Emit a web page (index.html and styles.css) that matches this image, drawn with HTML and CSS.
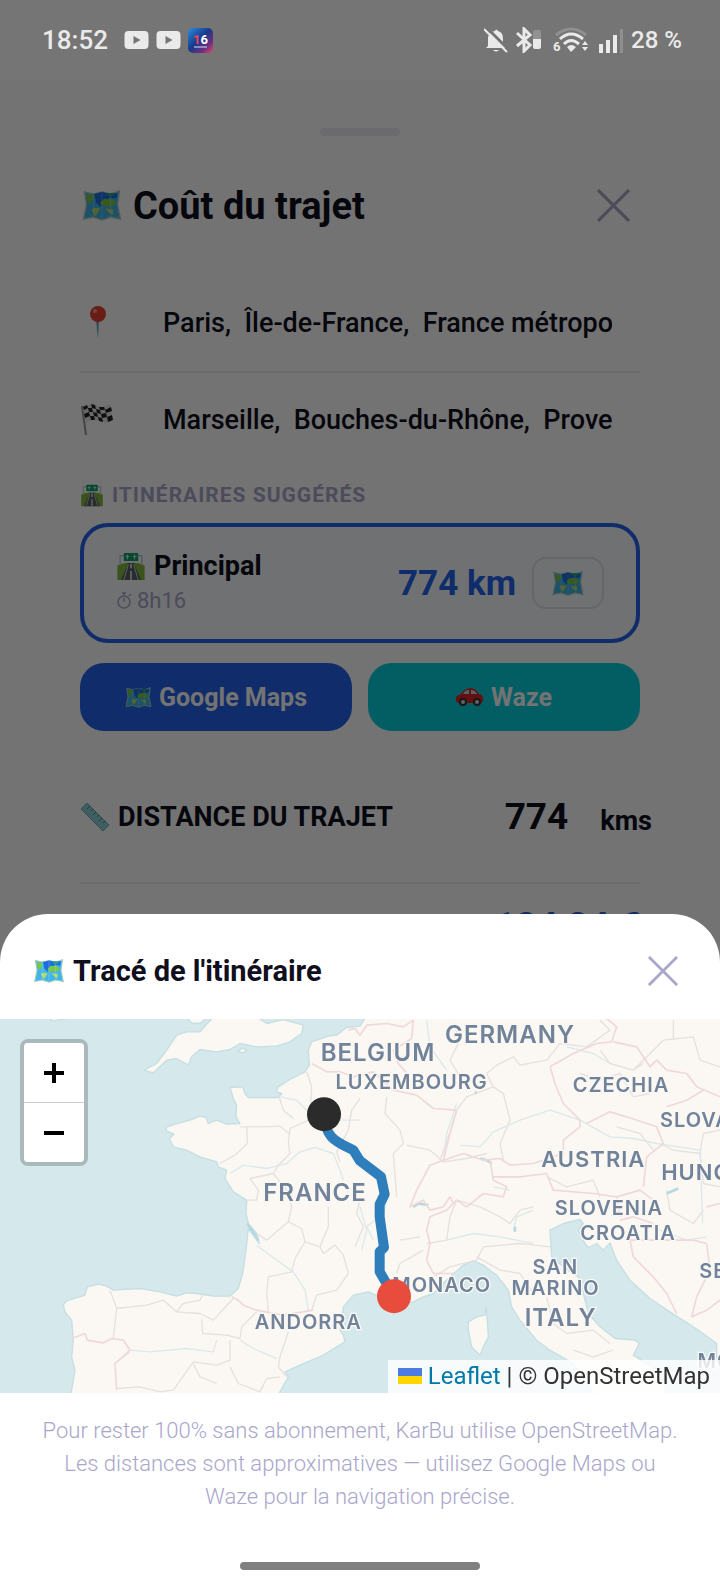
FILE: index.html
```html
<!DOCTYPE html>
<html lang="fr">
<head>
    <meta charset="UTF-8">
    <meta name="viewport" content="width=device-width, initial-scale=1.0">
    <title>KarBu - Coût du trajet</title>
    <link rel="stylesheet" href="styles.css">
</head>
<body>
    <!-- Shared icons -->
    <svg class="icon-defs" aria-hidden="true">
        <symbol id="icon-map" viewBox="0 0 40 32">
            <path d="M2 2 L11 4 L20 2 L29 4 L38 1 L36 15 L39 30 L29 28 L20 31 L11 28 L1 30 L4 15 Z" fill="#3fb5e8" stroke="#a9c9c6" stroke-width="1.5"/>
            <path d="M12 4 L20 2 L29 4 L36 3 L35 9 L27 8 L24 14 L18 17 L14 13 Z" fill="#1d6fe0"/>
            <path d="M4 4 L10 5 L12 8 L9 11 L8 15 L5 12 Z M18 14 L22 9 L31 10 L35 14 L29 17 L20 16 Z" fill="#7ac943"/>
            <path d="M9 20 Q13 17 18 19 L16 23 L13 27 Z M23 19 L32 20 L31 26 L27 23 Z" fill="#b5d96a"/>
            <path d="M24 3 L34 3 L32 6 L26 6 Z" fill="#2ba084"/>
            <path d="M11 5 V28 M20 3 V30 M29 5 V28" stroke="#fff" stroke-opacity=".25"/>
        </symbol>
        <symbol id="icon-road" viewBox="0 0 32 32">
            <path d="M1 15 Q8 11 16 12 Q24 11 31 15 V31 H1 Z" fill="#7fb83a"/>
            <path d="M13 12 H19 L27 31 H5 Z" fill="#5a5f66"/>
            <path d="M16 13 V18 M16 21 V31" stroke="#fff" stroke-width="1.5"/>
            <path d="M13 14 L8 31 M19 14 L24 31" stroke="#ddd"/>
            <path d="M4 15 V4 H28 V15" fill="none" stroke="#b8c4cc" stroke-width="1.5"/>
            <rect x="8" y="1" width="16" height="9" rx="1" fill="#12a06a"/>
            <path d="M12 3 V8 M10 5 H14 M20 3 V8 M18 5 H22" stroke="#d8fff0"/>
        </symbol>
        <symbol id="icon-close" viewBox="0 0 32 32">
            <path d="M1 1 L31 31 M31 1 L1 31" fill="none" stroke="#a9a6cb" stroke-width="3"/>
        </symbol>
        <symbol id="icon-youtube" viewBox="0 0 24 18">
            <path d="M4 0 H20 Q24 0 24 4 V14 Q24 18 20 18 H4 Q0 18 0 14 V4 Q0 0 4 0 Z M9 5 V13 L16 9 Z" fill="#eaeaea" fill-rule="evenodd"/>
        </symbol>
    </svg>

    <div class="status-bar">
        <div class="status-left">
            <span class="clock">18:52</span>
            <svg width="25" height="18"><use href="#icon-youtube"/></svg>
            <svg width="25" height="18"><use href="#icon-youtube"/></svg>
            <svg width="25" height="25" viewBox="0 0 25 25">
                <defs>
                    <linearGradient id="app-bg" x1="0" y1="0" x2="1" y2="1">
                        <stop offset="0" stop-color="#2c8fe0"/>
                        <stop offset=".45" stop-color="#173a8c"/>
                        <stop offset=".75" stop-color="#6a2f80"/>
                        <stop offset="1" stop-color="#f0455c"/>
                    </linearGradient>
                </defs>
                <rect width="25" height="25" rx="5" fill="url(#app-bg)"/>
                <text x="5" y="16" class="app-digit"><tspan class="app-digit-red">1</tspan>6</text>
                <path d="M6 19 H19" stroke="#d8def5" stroke-width="1"/>
            </svg>
        </div>
        <div class="status-right">
            <svg width="25" height="25" viewBox="0 0 25 25">
                <path d="M4 18 V9 Q6 3 11 3 Q12 0 14 3 Q19 4 19 11 V15 L22 20 H2 Z M9 22 H15 Q12 25 9 22 Z" fill="#eaeaea"/>
                <path d="M2 -1 L26 23" stroke="#757575" stroke-width="3"/>
                <path d="M0 1 L23 24" stroke="#eaeaea" stroke-width="2"/>
            </svg>
            <svg width="26" height="26" viewBox="0 0 26 26">
                <path d="M1 6 L14 18 L8 24 V2 L14 8 L1 19" fill="none" stroke="#eaeaea" stroke-width="3"/>
                <path d="M17 12 V5 Q17 3 19 3 H23 Q25 3 25 5 V12 Z" fill="#929292"/>
                <path d="M17 12 H25 V20 Q25 22 23 22 H19 Q17 22 17 20 Z" fill="#eaeaea"/>
            </svg>
            <svg class="wifi" width="36" height="26" viewBox="0 0 36 26">
                <path d="M3 8 Q18 -4 33 8" fill="none" stroke="#8f8f8f" stroke-width="3"/>
                <path d="M7 12 Q18 2 30 12 M11 17 Q18 10 26 17" fill="none" stroke="#eaeaea" stroke-width="3"/>
                <path d="M14 20 Q18 16 23 20 L18 25 Z M29 18 L32 14 L35 18 Z M29 20 L32 24 L35 20 Z" fill="#eaeaea"/>
                <text x="0" y="24" class="wifi-gen">6</text>
            </svg>
            <svg class="signal" width="26" height="25" viewBox="0 0 26 25">
                <path d="M1 16 H5 V25 H1 Z M8 12 H12 V25 H8 Z M15 7 H19 V25 H15 Z" fill="#eaeaea"/>
                <path d="M22 1 H25 V25 H22 Z" fill="#8f8f8f"/>
            </svg>
            <span class="battery">28 %</span>
        </div>
    </div>

    <main class="trip">
        <div class="handle"></div>
        <header class="trip-header">
            <h1><svg width="40" height="31"><use href="#icon-map"/></svg> Coût du trajet</h1>
            <button class="close" aria-label="Fermer"><svg width="33" height="33"><use href="#icon-close"/></svg></button>
        </header>

        <div class="place">
            <label for="from" aria-label="Départ">
                <svg width="34" height="34" viewBox="0 0 34 34">
                    <path d="M16 14 H19 L18 33 Z" fill="#6fa5b4"/>
                    <circle cx="18" cy="8" r="8" fill="#e8432f"/>
                    <circle cx="15" cy="5" r="2" fill="#f59a8b"/>
                </svg>
            </label>
            <input type="text" id="from" value="Paris,  Île-de-France,  France métropolitaine">
        </div>
        <div class="place">
            <label for="to" aria-label="Arrivée">
                <svg width="34" height="34" viewBox="0 0 34 34">
                    <path d="M2 3 L6 32" stroke="#9a9a9a" stroke-width="2"/>
                    <path d="M3 4 Q11 -1 17 3 Q24 5 30 1 L33 17 Q26 22 19 18 Q12 15 6 20 Z" fill="#e9e9e9"/>
                    <path d="M3 4 L7 2 L8 5 L4 7 Z M11 1 L15 2 L16 6 L12 5 Z M19 4 L24 4 L25 7 L20 7 Z M8 5 L12 5 L13 9 L9 9 Z M16 6 L20 7 L21 11 L17 10 Z M25 7 L31 4 L32 8 L26 10 Z M4 11 L9 9 L10 13 L5 15 Z M13 9 L17 10 L18 14 L14 13 Z M21 11 L26 10 L27 14 L22 15 Z M10 13 L14 13 L15 17 L11 17 Z M18 14 L22 15 L23 19 L19 18 Z M27 14 L32 12 L33 17 L28 19 Z" fill="#222"/>
                </svg>
            </label>
            <input type="text" id="to" value="Marseille,  Bouches-du-Rhône,  Provence">
        </div>

        <h2 class="section-label"><svg width="24" height="23"><use href="#icon-road"/></svg> ITINÉRAIRES SUGGÉRÉS</h2>
        <div class="route-card">
            <div class="route-info">
                <div class="route-name"><svg width="30" height="29"><use href="#icon-road"/></svg> Principal</div>
                <div class="route-time">
                    <svg width="16" height="18" viewBox="0 0 16 18" fill="none" stroke="#a9a6cb" stroke-width="1.5"><circle cx="8" cy="10" r="6"/><path d="M8 10 V6 M6 1 H10 M8 1 V3 M13 4 L15 2"/></svg>
                    8h16
                </div>
            </div>
            <div class="route-km">774 km</div>
            <button class="show-map" aria-label="Voir le tracé"><svg width="32" height="25"><use href="#icon-map"/></svg></button>
        </div>
        <div class="nav-buttons">
            <button class="google"><svg width="27" height="21"><use href="#icon-map"/></svg> Google Maps</button>
            <button class="waze">
                <svg width="28" height="18" viewBox="0 0 28 18">
                    <path d="M0 9 Q1 7 5 6 Q8 1 14 0 Q20 0 23 6 Q28 7 27 12 L26 15 H2 Q-1 13 0 9 Z" fill="#e02424"/>
                    <path d="M7 6 Q9 2 13 2 V6 Z M15 2 Q19 2 21 6 H15 Z" fill="#b9dbe8"/>
                    <circle cx="7" cy="14" r="4" fill="#333"/><circle cx="7" cy="14" r="2" fill="#ddd"/>
                    <circle cx="21" cy="14" r="4" fill="#333"/><circle cx="21" cy="14" r="2" fill="#ddd"/>
                </svg>
                Waze
            </button>
        </div>

        <div class="distance">
            <span class="distance-label">
                <svg width="30" height="30" viewBox="0 0 30 30">
                    <path d="M1 7 L7 1 L29 23 L23 29 Z" fill="#8fd0d8" stroke="#6fb0b8"/>
                    <path d="M10 4 L7 7 M13 7 L11 9 M16 10 L13 13 M19 13 L17 15 M22 16 L19 19 M25 19 L23 21" stroke="#4d8a94"/>
                </svg>
                DISTANCE DU TRAJET
            </span>
            <span class="distance-value">774</span>
            <span class="distance-unit">kms</span>
        </div>
        <div class="cost">
            <span class="cost-label">Coût</span>
            <span class="cost-value">124,24 €</span>
        </div>
    </main>

    <div class="overlay">
        <section class="sheet">
            <header class="sheet-header">
                <h2><svg width="30" height="24"><use href="#icon-map"/></svg> Tracé de l'itinéraire</h2>
                <button class="close" aria-label="Fermer"><svg width="30" height="30"><use href="#icon-close"/></svg></button>
            </header>

            <div class="map">
                <!-- 3 map units = 1px -->
                <svg class="map-canvas" viewBox="0 25 2160 1125" preserveAspectRatio="xMidYMid slice">
                    <g class="land">
                        <path d="M1110 0 L1080 48 L1040 52 L1010 75 L985 78 L935 95 L925 120 L928 165 L915 185 L870 208 L835 230 L828 245 L845 250 L835 262 L790 262 L745 262 L735 250 L728 230 L690 232 L700 265 L710 285 L708 320 L720 340 L680 342 L650 330 L625 340 L618 322 L600 318 L570 330 L540 338 L500 350 L498 362 L522 372 L508 385 L520 410 L560 420 L600 440 L650 455 L655 470 L680 480 L675 505 L700 545 L740 570 L738 610 L745 640 L770 670 L778 700 L745 655 L738 720 L728 790 L715 835 L690 858 L640 858 L590 850 L560 848 L530 858 L480 845 L420 835 L340 840 L320 828 L295 822 L262 830 L255 855 L200 872 L190 885 L195 905 L215 930 L220 990 L215 1040 L225 1080 L208 1180 L820 1180 L865 1100 L855 1085 L900 1065 L970 1035 L1035 995 L1030 975 L1020 960 L1030 890 L1060 855 L1105 845 L1140 860 L1200 880 L1240 875 L1270 860 L1300 850 L1350 800 L1390 765 L1420 752 L1450 765 L1490 795 L1525 840 L1535 890 L1560 930 L1610 990 L1650 1020 L1720 1060 L1800 1180 L2010 1180 L1980 1085 L1900 1035 L1918 1000 L1905 990 L1845 985 L1800 950 L1765 910 L1750 850 L1735 800 L1690 770 L1655 740 L1650 660 L1690 640 L1740 628 L1750 640 L1735 660 L1755 700 L1765 712 L1790 700 L1810 720 L1830 698 L1850 750 L1890 810 L1950 865 L2010 905 L2080 950 L2130 985 L2150 1000 L2150 1040 L2180 1060 L2180 0 Z"/>
                        <path d="M432 180 L470 160 L500 120 L530 75 L560 65 L600 65 L640 20 L770 20 L800 40 L850 28 L910 45 L905 70 L870 95 L830 108 L770 110 L720 100 L690 118 L650 125 L600 118 L575 140 L565 165 L530 145 L500 150 L460 188 Z"/>
                        <path d="M555 20 L575 38 L600 40 L625 20 Z M140 20 L160 32 L230 20 Z M712 122 L730 114 L740 121 L728 128 Z"/>
                        <path d="M1458 890 L1462 930 L1465 980 L1450 1010 L1440 1035 L1415 1010 L1405 960 L1405 935 L1430 920 L1455 915 Z"/>
                    </g>
                    <g class="regions">
                        <path d="M920 185 L935 230 L932 290 L925 330 L870 355 L865 400 L870 430 L835 465 L820 490 L750 505 M740 350 L742 400 L705 435 L660 460 M720 350 L790 350 L840 348 L870 372 M838 262 L850 300 L880 325 M1080 265 L1055 300 L1045 360 L1010 425 L1020 455 M750 505 L775 540 L770 570 L742 570"/>
                        <path d="M820 490 L860 540 L875 590 L865 635 L800 690 L770 670 M865 635 L905 655 L915 695 L885 745 L875 785 L805 800 L800 850 L805 905 M915 695 L960 710 L985 650 L985 590 M960 710 L970 730 L1005 705 L1030 735 L1045 790 L1010 840 L950 855 L935 900 M1080 570 L1070 610 L1090 650 L1065 710"/>
                        <path d="M330 840 L350 895 L440 885 L490 870 L530 905 L600 910 L640 930 L700 865 M350 895 L340 985 M530 905 L550 880 L600 870 L610 850 M605 925 L608 970 L680 975 L720 985 M720 985 L725 950 L770 905 M865 965 L850 1010 L840 1040 L835 1070 L860 1100 M345 1060 L390 1025 M350 1135 L420 1130 L480 1145 L520 1140 L580 1055 L650 1065 L690 1050 L690 990 M580 1060 L600 1100 L650 1120 M690 1070 L715 1120 L780 1145 L800 1105 L840 1100"/>
                        <path d="M1160 260 L1155 310 L1200 360 L1210 400 L1180 430 L1190 560 M1320 450 L1345 380 L1370 300 L1400 260 L1480 230 L1510 250 L1530 330 L1500 400 L1510 450 M1220 405 L1290 420 L1330 455 L1400 445 L1460 430 M1380 200 L1350 150 L1380 90 L1360 40 M1490 165 L1460 190 L1480 230 M1490 165 L1540 140 L1560 165 L1640 150 M1640 150 L1680 100 L1760 110 L1830 60"/>
                        <path d="M1280 700 L1340 690 L1350 620 L1370 570 L1440 590 L1500 620 L1530 640 L1560 600 L1600 590 M1200 690 L1260 680 M1190 790 L1200 760 L1270 720 M1300 800 L1350 770 L1430 750 L1450 710 L1560 700 L1650 710 M1430 740 L1500 780 L1560 790 L1600 850 M1640 860 L1660 940 L1700 970 L1780 960 L1830 1000 M1720 1020 L1780 1040 L1840 1020"/>
                        <path d="M1800 120 L1830 160 L1900 180 L1930 160 M1740 190 L1800 210 L1860 190 L1900 260 L1950 250 M1850 350 L1920 370 L1960 420 M1640 500 L1700 530 L1780 510 L1800 560 M1980 400 L2020 420 L2100 430 L2110 370 L2160 360 M2000 540 L2010 600 L2080 640 L2110 600 M1900 180 L1990 90 L2080 80 L2100 150 L2160 170 M2020 30 L2020 90 M1830 60 L1800 30 M2100 430 L2110 520 L2160 530"/>
                    </g>
                    <g class="rivers">
                        <path d="M690 490 L730 465 L800 475 L860 460 L900 425 L945 412 L1000 430 L1020 480 L1030 510 M840 260 L890 270 L920 300 L960 330 L1080 330 M770 705 L830 750 L880 785 L915 840 L925 900 M390 1020 L450 1025 L560 1015 L640 1025 L650 990 M720 990 L760 1015 L830 1045 M1080 590 L1100 660 L1085 720"/>
                        <path d="M1280 30 L1290 110 L1340 180 M1380 405 L1440 410 L1480 365 L1560 330 L1650 300 L1740 330 L1830 380 L1900 385 L1970 400 L2100 420 L2108 640 M1330 450 L1340 370 L1370 280 M1160 570 L1150 610 L1100 650 L1120 690 M1340 690 L1420 670 L1500 680 L1600 700 M1700 110 L1780 130 L1830 160 M1530 540 L1480 530 M1540 660 L1550 620 L1600 600 M1920 640 L1980 660 L2060 690 L2120 680"/>
                        <path class="lake" d="M1240 590 L1255 580 L1285 585 M1440 445 L1460 450 L1475 460 M1545 650 L1545 665 M2000 550 L2035 535 M1425 245 L1430 248 M742 640 L775 690"/>
                    </g>
                    <g class="borders">
                        <path d="M1045 60 L1065 55 L1080 75 L1100 45 L1160 40 L1210 50 L1240 30 M1240 30 L1235 85 L1180 120 L1195 160 L1230 200 M935 160 L980 185 L1020 185 L1060 200 L1120 185 L1180 240 L1250 255 L1300 295 L1370 300 M1370 300 L1350 370 L1330 450 L1290 465 L1250 540 L1230 590 L1270 570 L1290 600 L1330 590 L1350 560 L1360 580"/>
                        <path d="M1330 450 L1390 430 L1450 450 L1500 445 L1530 465 L1600 460 L1690 430 L1690 390 L1740 350 L1740 330 L1690 280 L1665 220 L1650 170 M1650 170 L1720 130 L1790 100 L1835 95 L1850 50 L1820 25 M1840 95 L1910 110 L1950 170 L1970 150 L2000 180 L2060 190 L2090 230 L2160 260 M1760 340 L1830 305 L1880 320 L1970 350 L1990 400 L1940 440 L1930 530"/>
                        <path d="M1470 450 L1480 510 L1520 530 L1510 560 L1450 550 L1400 590 L1370 570 L1340 600 L1290 620 L1280 660 L1290 700 L1280 750 L1300 790 L1360 790 M1480 500 L1560 500 L1640 490 L1660 540 L1780 550 L1850 560 L1920 540 L1960 570 M1850 560 L1860 620 M1860 630 L1900 620 L1960 640 M1890 690 L1960 690 L2080 690 L2120 700 M1890 690 L1900 740 L1960 800 L2000 850 L2030 910 M2120 700 L2130 780 L2090 860 L2075 920 M2075 920 L2120 900 L2160 870 M2000 290 L2060 270 L2110 240 M2120 590 L2160 580"/>
                        <path d="M215 985 L255 970 L262 990 L310 998 L335 985 L370 990 L390 1020 L345 1060 L350 1140 M695 860 L715 870 L730 885 L770 900 L850 915 L940 900"/>
                    </g>
                    <g class="labels">
                        <g class="label-xl">
                            <text x="1530" y="98">GERMANY</text>
                            <text x="1134" y="154">BELGIUM</text>
                            <text x="945" y="572">FRANCE</text>
                            <text x="1682" y="947">ITALY</text>
                        </g>
                        <g class="label-lg">
                            <text x="1780" y="470">AUSTRIA</text>
                            <text x="2160" y="510">HUNGARY</text>
                        </g>
                        <text x="1235" y="238">LUXEMBOURG</text>
                        <text x="1863" y="246">CZECHIA</text>
                        <text x="2142" y="350">SLOVAKIA</text>
                        <text x="1827" y="614">SLOVENIA</text>
                        <text x="1884" y="689">CROATIA</text>
                        <text x="1666" y="793">SAN</text>
                        <text x="1667" y="855">MARINO</text>
                        <text x="1325" y="846">MONACO</text>
                        <text x="925" y="957">ANDORRA</text>
                        <text x="2214" y="805">SERBIA</text>
                        <text x="2325" y="1074">MONTENEGRO</text>
                    </g>
                    <path class="route-line" d="M972 312 C975 385 1010 395 1060 420 L1080 452 L1143 500 L1154 552 L1139 582 L1139 620 L1152 712 L1139 725 L1139 785 L1182 858"/>
                    <circle cx="972" cy="312" r="51" fill="#2b2b2b"/>
                    <circle cx="1182" cy="858" r="51" fill="#e74c3c"/>
                </svg>
                <div class="zoom-control">
                    <button aria-label="Zoom avant"><svg width="22" height="22" viewBox="0 0 22 22"><path d="M11 1 V21 M1 11 H21" stroke="#000" stroke-width="4"/></svg></button>
                    <button aria-label="Zoom arrière"><svg width="22" height="22" viewBox="0 0 22 22"><path d="M1 11 H21" stroke="#000" stroke-width="4"/></svg></button>
                </div>
                <div class="attribution">
                    <svg width="24" height="16" viewBox="0 0 24 16"><path d="M0 0 H24 V8 H0 Z" fill="#4c7be1"/><path d="M0 8 H24 V16 H0 Z" fill="#ffd500"/></svg>
                    <a href="#">Leaflet</a> | © OpenStreetMap
                </div>
            </div>

            <p class="note">Pour rester 100% sans abonnement, KarBu utilise OpenStreetMap. Les distances sont approximatives — utilisez Google Maps ou Waze pour la navigation précise.</p>
            <div class="home-bar"></div>
        </section>
    </div>
</body>
</html>
```
FILE: styles.css
```css
* {
    box-sizing: border-box;
}
body {
    margin: 0;
    height: 100vh;
    overflow: hidden;
    background: #fff;
    color: #0f0f1e;
    font-family: Roboto, "Liberation Sans", sans-serif;
}
button {
    font-family: inherit;
    border: none;
    padding: 0;
    cursor: pointer;
}
h1, h2, p {
    margin: 0;
}
.icon-defs {
    position: absolute;
    width: 0;
    height: 0;
}

/* Status bar */
.status-bar {
    position: relative;
    z-index: 2;
    height: 80px;
    padding: 0 38px 0 42px;
    display: flex;
    align-items: center;
    justify-content: space-between;
    background: #757575;
    color: #eaeaea;
    font-weight: 500;
}
.status-left, .status-right {
    display: flex;
    align-items: center;
    gap: 7px;
}
.clock {
    font-size: 26px;
    margin-right: 9px;
}
.battery {
    font-size: 24px;
}
.wifi {
    margin-left: 4px;
}
.signal {
    margin-left: 2px;
}
.app-digit {
    font-size: 13px;
    font-weight: 700;
    fill: #fff;
}
.app-digit-red {
    fill: #f0455c;
}
.wifi-gen {
    font-size: 13px;
    font-weight: 700;
    fill: #eaeaea;
}

/* Trip form */
.trip {
    padding: 48px 80px 0;
}
.handle {
    width: 80px;
    height: 8px;
    margin: 0 auto;
    border-radius: 4px;
    background: #eeeef3;
}
.trip-header {
    height: 139px;
    padding: 0 10px 0 2px;
    display: flex;
    align-items: center;
    justify-content: space-between;
}
.trip-header h1 {
    display: flex;
    align-items: center;
    gap: 11px;
    font-size: 38px;
    font-weight: 700;
}
.close {
    display: flex;
    background: none;
}
.place {
    height: 96px;
    padding-right: 28px;
    display: flex;
    align-items: center;
}
.place + .place {
    border-top: 2px solid #eeeef3;
}
.place label {
    display: flex;
    width: 83px;
}
.place input {
    flex: 1;
    min-width: 0;
    padding: 0;
    border: none;
    outline: none;
    background: none;
    color: #0f0f1e;
    font-family: inherit;
    font-size: 27px;
    font-weight: 500;
}
.section-label {
    height: 32px;
    margin: 12px 0;
    display: flex;
    align-items: center;
    gap: 8px;
    color: #a9a6cb;
    font-size: 21px;
    font-weight: 700;
    letter-spacing: 1px;
}
.route-card {
    height: 120px;
    padding: 0 32px;
    border: 4px solid #2563eb;
    border-radius: 28px;
    background: #f7faff;
    display: flex;
    align-items: center;
}
.route-info {
    flex: 1;
}
.route-name {
    display: flex;
    align-items: center;
    gap: 8px;
    font-size: 27px;
    font-weight: 700;
    line-height: 36px;
}
.route-time {
    display: flex;
    align-items: center;
    gap: 5px;
    color: #a9a6cb;
    font-size: 22px;
    line-height: 34px;
}
.route-km {
    color: #2563eb;
    font-size: 35px;
    font-weight: 700;
}
.show-map {
    width: 72px;
    height: 52px;
    margin-left: 16px;
    display: flex;
    align-items: center;
    justify-content: center;
    border: 2px solid #e4e4ee;
    border-radius: 14px;
    background: #f7faff;
}
.nav-buttons {
    display: flex;
    gap: 16px;
    margin-top: 20px;
}
.nav-buttons button {
    flex: 1;
    height: 68px;
    display: flex;
    align-items: center;
    justify-content: center;
    gap: 7px;
    border-radius: 24px;
    color: #fff;
    font-size: 25px;
    font-weight: 700;
}
.nav-buttons .google {
    background: #2563eb;
}
.nav-buttons .waze {
    background: #06d1dc;
}
.distance {
    height: 151px;
    margin-right: -12px;
    padding-top: 20px;
    display: flex;
    align-items: center;
}
.distance-label {
    flex: 1;
    display: flex;
    align-items: center;
    gap: 8px;
    font-size: 27px;
    font-weight: 700;
}
.distance-value {
    font-size: 37px;
    font-weight: 700;
}
.distance-unit {
    padding-top: 8px;
    margin-left: 32px;
    font-size: 27px;
    font-weight: 700;
}
.cost {
    display: flex;
    align-items: baseline;
    justify-content: space-between;
    padding: 20px 0 0 60px;
    border-top: 2px solid #eeeef3;
    font-weight: 700;
}
.cost-label {
    font-size: 27px;
}
.cost-value {
    color: #2563eb;
    font-size: 37px;
}

/* Bottom sheet */
.overlay {
    position: fixed;
    inset: 0;
    display: flex;
    flex-direction: column;
    justify-content: flex-end;
    background: rgba(0, 0, 0, 0.55);
}
.sheet {
    background: #fff;
    border-radius: 48px 48px 0 0;
}
.sheet-header {
    height: 105px;
    padding: 8px 42px 0 34px;
    display: flex;
    align-items: center;
    justify-content: space-between;
}
.sheet-header h2 {
    display: flex;
    align-items: center;
    gap: 9px;
    font-size: 29px;
    font-weight: 700;
}
.map {
    position: relative;
    height: 374px;
    overflow: hidden;
    background: #d5e8eb;
}
.map-canvas {
    display: block;
    width: 100%;
    height: 100%;
}
.land {
    fill: #fbf8f3;
    stroke: #c5dfe3;
    stroke-width: 4;
    stroke-linejoin: round;
}
.regions, .rivers, .borders {
    fill: none;
    stroke-width: 4;
    stroke-linejoin: round;
}
.regions {
    stroke: #e6e0de;
}
.rivers {
    stroke: #dbe9ea;
}
.rivers .lake {
    stroke: #b5d9e0;
    stroke-width: 8;
}
.borders {
    stroke: #f0d8da;
    stroke-width: 5;
}
.labels {
    font-family: Inter, sans-serif;
    font-size: 60px;
    font-weight: 600;
    letter-spacing: 3px;
    text-anchor: middle;
    fill: #71839a;
    stroke: #fbf8f3;
    stroke-width: 8;
    paint-order: stroke;
}
.label-lg {
    font-size: 66px;
}
.label-xl {
    font-size: 72px;
}
.route-line {
    fill: none;
    stroke: #2e7ebc;
    stroke-width: 30;
    stroke-linejoin: round;
}
.zoom-control {
    position: absolute;
    top: 20px;
    left: 20px;
    width: 68px;
    border: 4px solid rgba(0, 0, 0, 0.2);
    border-radius: 8px;
    background-clip: padding-box;
}
.zoom-control button {
    width: 100%;
    height: 59px;
    display: flex;
    align-items: center;
    justify-content: center;
    background: #fff;
    border-radius: 4px 4px 0 0;
}
.zoom-control button + button {
    height: 60px;
    border-top: 1px solid #ccc;
    border-radius: 0 0 4px 4px;
}
.attribution {
    position: absolute;
    right: 0;
    bottom: 0;
    padding: 0 10px;
    background: rgba(255, 255, 255, 0.8);
    color: #333;
    font-size: 24px;
    line-height: 33px;
}
.attribution a {
    color: #0078a8;
    text-decoration: none;
}
.note {
    padding: 21px 38px 0;
    color: #a9a6cb;
    font-size: 22px;
    font-weight: 300;
    line-height: 33px;
    text-align: center;
}
.home-bar {
    width: 240px;
    height: 8px;
    margin: 49px auto 14px;
    border-radius: 4px;
    background: #808080;
}
```
